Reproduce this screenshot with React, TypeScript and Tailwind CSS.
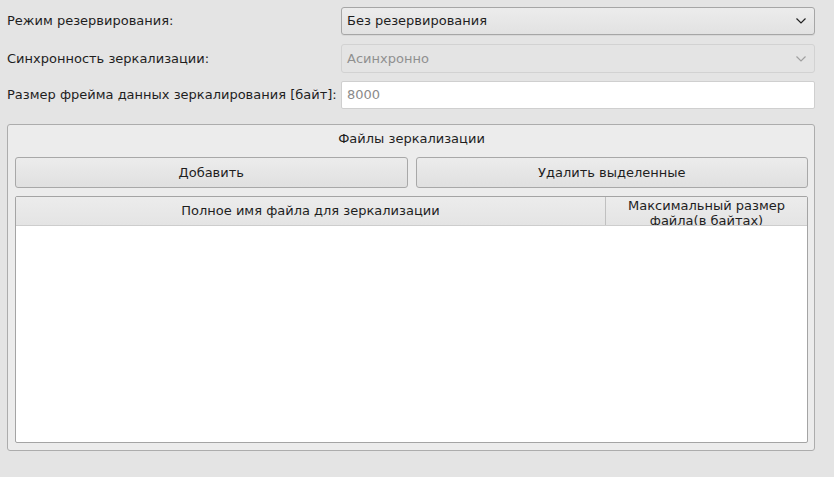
import React from "react";

function Chevron({ color }: { color: string }) {
  return (
    <svg width="10" height="6" viewBox="0 0 10 6" className="shrink-0">
      <polyline points="0.5,0.5 5,5 9.5,0.5" fill="none" stroke={color} strokeWidth="1.2" />
    </svg>
  );
}

export default function App() {
  return (
    <div className="w-[834px] h-[477px] bg-[#e4e4e4] font-['DejaVu_Sans',sans-serif] text-[13px] text-[#1e1e1e] pt-[7px] pl-[7px] overflow-hidden">
      <div className="w-[808px] flex flex-col">
        <div className="flex items-center h-[28px]">
          <div className="w-[334px]">Режим резервирования:</div>
          <div className="flex-1 h-full flex items-center justify-between pl-[5px] pr-[8px] border border-[#a6a6a6] rounded-[3px] bg-gradient-to-b from-[#ececec] to-[#e2e2e2] shadow-[0_1px_0_#d8d8d8]">
            <span>Без резервирования</span>
            <Chevron color="#222" />
          </div>
        </div>
        <div className="flex items-center h-[29px] mt-[9px]">
          <div className="w-[334px] pt-px">Синхронность зеркализации:</div>
          <div className="flex-1 h-full flex items-center justify-between pl-[5px] pr-[8px] border border-[#d2d2d2] rounded-[3px] bg-[#e4e4e4]">
            <span className="text-[#909090] pt-px">Асинхронно</span>
            <Chevron color="#a0a0a0" />
          </div>
        </div>
        <div className="flex items-center h-[28px] mt-[8px]">
          <div className="w-[334px]">Размер фрейма данных зеркалирования [байт]:</div>
          <div className="flex-1 h-full flex items-center pl-[5px] border border-[#cfcfcf] rounded-[2px] bg-white">
            <span className="text-[#8a8a8a]">8000</span>
          </div>
        </div>
        <div className="mt-[15px] h-[327px] border border-[#acacac] rounded-[3px] bg-[#ececec] pl-[7px] pr-[6px] flex flex-col">
          <div className="h-[32px] flex items-center justify-center pb-[5px]">Файлы зеркализации</div>
          <div className="flex gap-[8px] h-[31px]">
            <div className="flex-1 flex items-center justify-center border border-[#a8a8a8] rounded-[3px] bg-gradient-to-b from-[#ececec] to-[#e0e0e0]">Добавить</div>
            <div className="flex-1 flex items-center justify-center border border-[#a8a8a8] rounded-[3px] bg-gradient-to-b from-[#ececec] to-[#e0e0e0]">Удалить выделенные</div>
          </div>
          <div className="mt-[8px] h-[247px] border border-[#a4a4a4] rounded-[2px] bg-white flex flex-col overflow-hidden">
            <div className="flex h-[29px] bg-gradient-to-b from-[#ececec] to-[#e4e4e4] border-b border-[#cdcdcd]">
              <div className="w-[590px] flex items-center justify-center border-r border-[#c0c0c0]">Полное имя файла для зеркализации</div>
              <div className="flex-1 overflow-hidden text-center leading-[15px] pt-px">
                Максимальный размер<br />файла(в байтах)
              </div>
            </div>
            <div className="flex-1" />
          </div>
        </div>
      </div>
    </div>
  );
}
